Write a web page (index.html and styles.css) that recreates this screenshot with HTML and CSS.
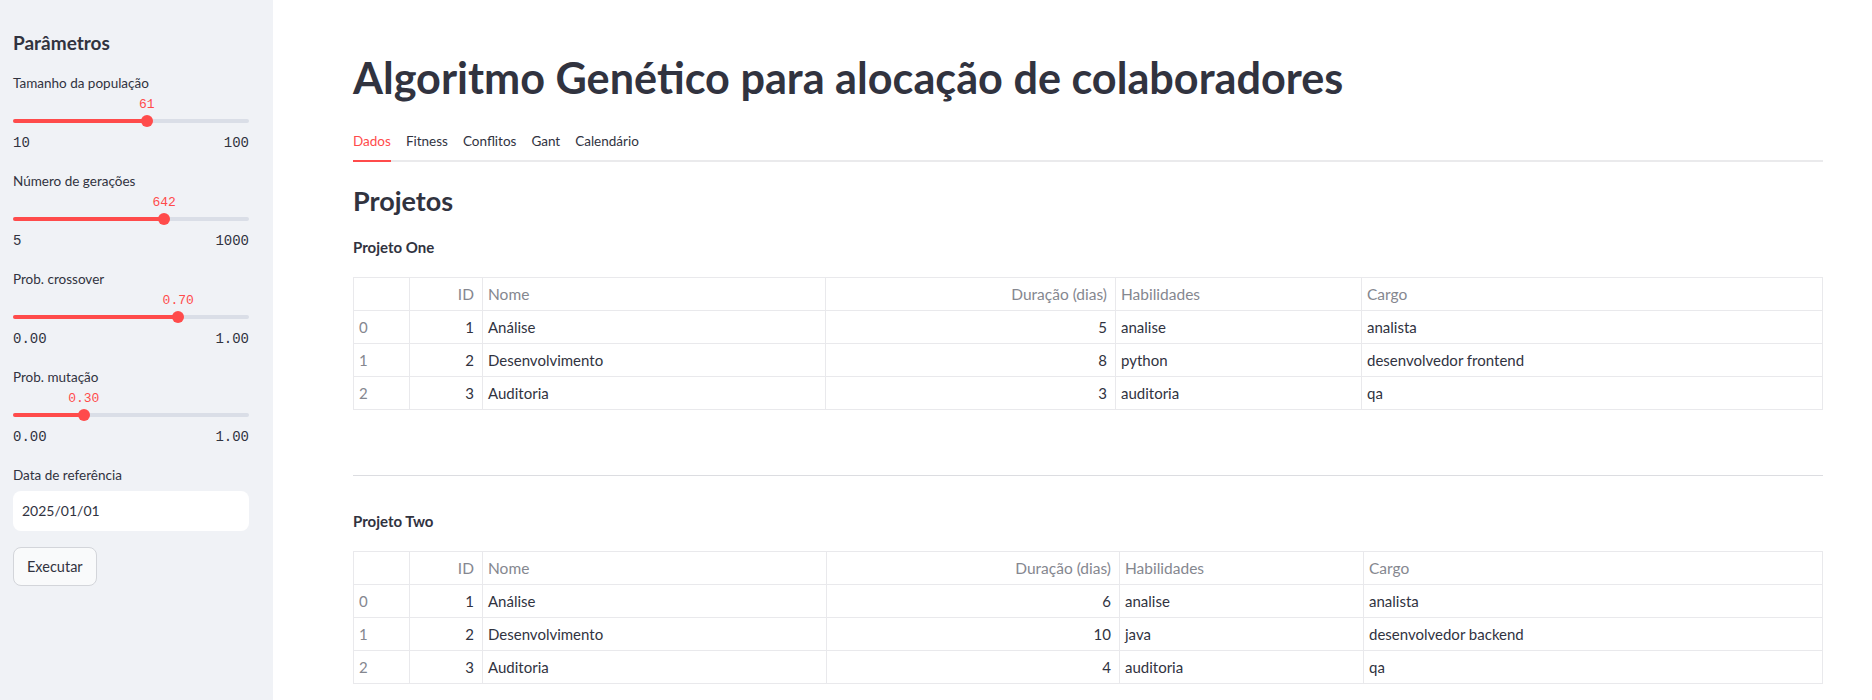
FILE: index.html
```html
<!DOCTYPE html>
<html lang="pt">
<head>
<meta charset="utf-8">
<title>Algoritmo Genético</title>
<link rel="stylesheet" href="styles.css">
</head>
<body>
<div class="app">
  <aside class="sidebar">
    <h2 class="side-title">Parâmetros</h2>

    <div class="widget">
      <div class="wlabel">Tamanho da população</div>
      <div class="slider">
        <div class="rail"><div class="fill" style="width:56.67%"></div></div>
        <div class="thumb" style="left:56.67%"></div>
        <div class="thumb-value" style="left:56.67%">61</div>
      </div>
      <div class="ticks"><span>10</span><span>100</span></div>
    </div>

    <div class="widget">
      <div class="wlabel">Número de gerações</div>
      <div class="slider">
        <div class="rail"><div class="fill" style="width:64.02%"></div></div>
        <div class="thumb" style="left:64.02%"></div>
        <div class="thumb-value" style="left:64.02%">642</div>
      </div>
      <div class="ticks"><span>5</span><span>1000</span></div>
    </div>

    <div class="widget">
      <div class="wlabel">Prob. crossover</div>
      <div class="slider">
        <div class="rail"><div class="fill" style="width:70%"></div></div>
        <div class="thumb" style="left:70%"></div>
        <div class="thumb-value" style="left:70%">0.70</div>
      </div>
      <div class="ticks"><span>0.00</span><span>1.00</span></div>
    </div>

    <div class="widget">
      <div class="wlabel">Prob. mutação</div>
      <div class="slider">
        <div class="rail"><div class="fill" style="width:30%"></div></div>
        <div class="thumb" style="left:30%"></div>
        <div class="thumb-value" style="left:30%">0.30</div>
      </div>
      <div class="ticks"><span>0.00</span><span>1.00</span></div>
    </div>

    <div class="date-widget">
      <div class="wlabel">Data de referência</div>
      <div class="date-input">2025/01/01</div>
    </div>

    <button class="btn" type="button">Executar</button>
  </aside>

  <main class="main">
    <h1 class="title">Algoritmo Genético para alocação de colaboradores</h1>

    <div class="tabs">
      <div class="tab active">Dados</div>
      <div class="tab">Fitness</div>
      <div class="tab">Conflitos</div>
      <div class="tab">Gant</div>
      <div class="tab">Calendário</div>
    </div>

    <h3 class="section">Projetos</h3>

    <div class="proj-name">Projeto One</div>
    <table class="grid grid-one">
      <thead>
        <tr><th class="idx"></th><th class="num">ID</th><th>Nome</th><th class="num">Duração (dias)</th><th>Habilidades</th><th>Cargo</th></tr>
      </thead>
      <tbody>
        <tr><td class="idx">0</td><td class="num">1</td><td>Análise</td><td class="num">5</td><td>analise</td><td>analista</td></tr>
        <tr><td class="idx">1</td><td class="num">2</td><td>Desenvolvimento</td><td class="num">8</td><td>python</td><td>desenvolvedor frontend</td></tr>
        <tr><td class="idx">2</td><td class="num">3</td><td>Auditoria</td><td class="num">3</td><td>auditoria</td><td>qa</td></tr>
      </tbody>
    </table>

    <hr class="divider">

    <div class="proj-name">Projeto Two</div>
    <table class="grid grid-two">
      <thead>
        <tr><th class="idx"></th><th class="num">ID</th><th>Nome</th><th class="num">Duração (dias)</th><th>Habilidades</th><th>Cargo</th></tr>
      </thead>
      <tbody>
        <tr><td class="idx">0</td><td class="num">1</td><td>Análise</td><td class="num">6</td><td>analise</td><td>analista</td></tr>
        <tr><td class="idx">1</td><td class="num">2</td><td>Desenvolvimento</td><td class="num">10</td><td>java</td><td>desenvolvedor backend</td></tr>
        <tr><td class="idx">2</td><td class="num">3</td><td>Auditoria</td><td class="num">4</td><td>auditoria</td><td>qa</td></tr>
      </tbody>
    </table>
  </main>
</div>
</body>
</html>
```

FILE: styles.css
```css
* { box-sizing: border-box; }

html, body {
  margin: 0;
  padding: 0;
  background: #ffffff;
}

body {
  font-family: "Lato", "Noto Sans", sans-serif;
  color: #31333f;
  font-size: 13.5px;
}

.app {
  display: flex;
  min-height: 700px;
}

/* ---------- Sidebar ---------- */
.sidebar {
  width: 273px;
  flex: 0 0 273px;
  background: #f0f2f6;
  padding: 29px 24px 0 13px;
  min-height: 700px;
}

.side-title {
  margin: 0 0 16px;
  font-size: 19px;
  font-weight: 700;
  line-height: 28px;
  color: #31333f;
}

.widget {
  margin-bottom: 18px;
}

.wlabel {
  height: 20px;
  line-height: 20px;
  font-size: 13.5px;
  color: #31333f;
  white-space: nowrap;
}

.slider {
  position: relative;
  height: 35px;
  padding-top: 26px;
}

.rail {
  height: 4px;
  border-radius: 2px;
  background: #dadee7;
  overflow: hidden;
}

.fill {
  height: 100%;
  background: #ff4b4b;
}

.thumb {
  position: absolute;
  top: 22px;
  width: 12px;
  height: 12px;
  margin-left: -6px;
  border-radius: 50%;
  background: #ff4b4b;
}

.thumb-value {
  position: absolute;
  top: 5px;
  transform: translateX(-50%);
  font-family: "Liberation Mono", "DejaVu Sans Mono", monospace;
  font-size: 13px;
  line-height: 14px;
  color: #ff4b4b;
  white-space: nowrap;
}

.ticks {
  margin-top: 5px;
  display: flex;
  justify-content: space-between;
  line-height: 20px;
  font-family: "Liberation Mono", "DejaVu Sans Mono", monospace;
  font-size: 14px;
  color: #31333f;
}

.date-widget {
  margin-top: 6px;
}

.date-input {
  margin-top: 6px;
  height: 40px;
  line-height: 40px;
  background: #ffffff;
  border-radius: 8px;
  padding-left: 9px;
  font-size: 14px;
  color: #31333f;
}

.btn {
  margin-top: 16px;
  height: 39px;
  padding: 0 13px;
  border: 1px solid #d3d5da;
  border-radius: 8px;
  background: #f9fafb;
  font-family: "Lato", "Noto Sans", sans-serif;
  font-size: 14.5px;
  color: #31333f;
  display: block;
}

/* ---------- Main ---------- */
.main {
  flex: 1;
  padding: 0 49px 0 80px;
  min-width: 0;
}

.title {
  margin: 51px 0 0;
  font-size: 43.2px;
  font-weight: 700;
  line-height: 52px;
  color: #31333f;
}

.tabs {
  margin-top: 19px;
  display: flex;
  gap: 15px;
  border-bottom: 2px solid #eaeaec;
}

.tab {
  height: 38px;
  line-height: 38px;
  font-size: 13.5px;
  color: #31333f;
  margin-bottom: -2px;
  border-bottom: 2px solid transparent;
  box-sizing: content-box;
}

.tab.active {
  color: #ff4b4b;
  border-bottom-color: #ff4b4b;
}

.section {
  margin: 23px 0 0;
  font-size: 27px;
  font-weight: 700;
  line-height: 1.2;
  color: #31333f;
}

.proj-name {
  margin-top: 20px;
  font-size: 15px;
  font-weight: 700;
  line-height: 18px;
  color: #31333f;
}

.section + .proj-name {
  margin-top: 21px;
}

.grid {
  margin-top: 21px;
  width: 100%;
  border-collapse: collapse;
  table-layout: fixed;
  font-size: 15px;
}

.grid th,
.grid td {
  height: 33px;
  padding: 0 8px 0 5px;
  border: 1px solid #e9e9ec;
  text-align: left;
  font-weight: 400;
  white-space: nowrap;
  overflow: hidden;
  color: #31333f;
}

.grid th {
  color: #85878f;
  font-size: 15.5px;
}

.grid .idx {
  color: #85878f;
}

.grid .num {
  text-align: right;
}

.grid-one th:nth-child(1) { width: 56px; }
.grid-one th:nth-child(2) { width: 73px; }
.grid-one th:nth-child(3) { width: 343px; }
.grid-one th:nth-child(4) { width: 290px; }
.grid-one th:nth-child(5) { width: 246px; }

.grid-two th:nth-child(1) { width: 56px; }
.grid-two th:nth-child(2) { width: 73px; }
.grid-two th:nth-child(3) { width: 344px; }
.grid-two th:nth-child(4) { width: 293px; }
.grid-two th:nth-child(5) { width: 244px; }

.divider {
  margin: 65px 0 0;
  border: 0;
  border-top: 1px solid #dcdde1;
  height: 0;
}

.divider + .proj-name {
  margin-top: 36px;
}
```
